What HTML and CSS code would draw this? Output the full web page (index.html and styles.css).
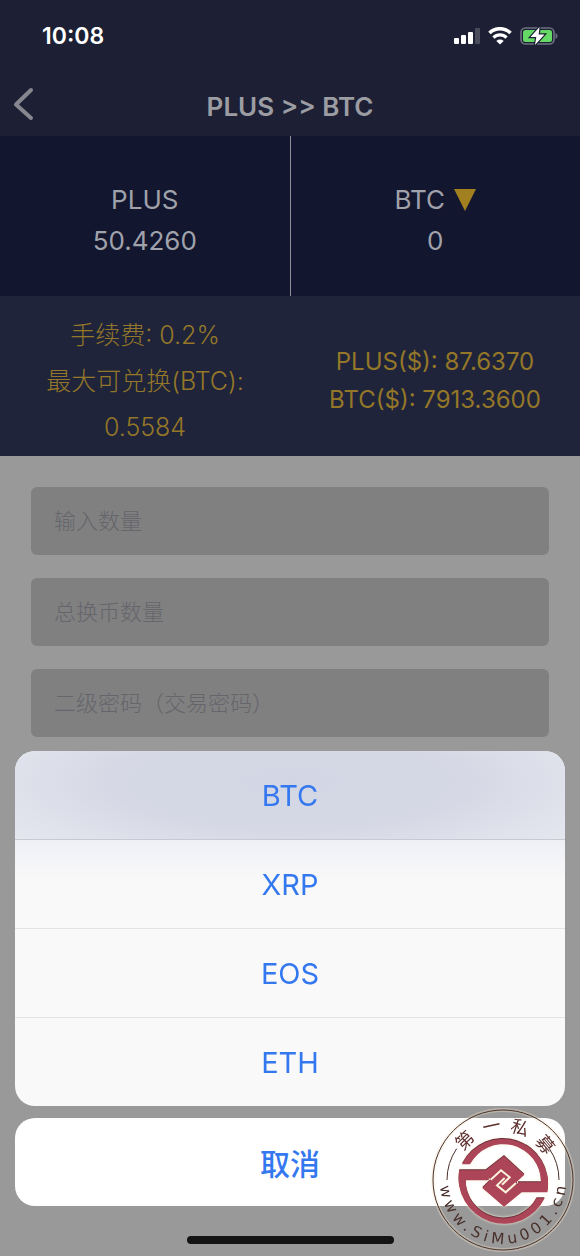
FILE: index.html
```
<!DOCTYPE html>
<html lang="zh-CN">
<head>
    <meta charset="UTF-8">
    <meta name="viewport" content="width=device-width, initial-scale=1.0">
    <title>PLUS &gt;&gt; BTC</title>
    <link rel="stylesheet" href="styles.css">
</head>
<body>
    <div class="status-bar">
        <span class="time">10:08</span>
        <div class="status-icons">
            <svg width="27" height="18" viewBox="0 0 27 18">
                <rect x="1" y="11" width="5" height="6" rx="1" fill="#fff"/>
                <rect x="8" y="8" width="5" height="9" rx="1" fill="#fff"/>
                <rect x="15" y="5" width="5" height="12" rx="1" fill="#fff"/>
                <rect x="22" y="1" width="5" height="16" rx="1" fill="#4a4c5c"/>
            </svg>
            <svg width="24" height="18" viewBox="0 0 24 18">
                <path d="M1.500 6a15 15 0 0 1 21 0" fill="none" stroke="#fff" stroke-width="3.6"/>
                <path d="M5.500 10.600a9.200 9.200 0 0 1 13 0" fill="none" stroke="#fff" stroke-width="3.2"/>
                <path d="M12 17.500l-3.700-3.600a5.400 5.400 0 0 1 7.400 0z" fill="#fff"/>
            </svg>
            <svg width="38" height="18" viewBox="0 0 38 18">
                <rect x="1" y="1" width="33" height="16" rx="4.5" fill="none" stroke="#6f7180" stroke-width="1.6"/>
                <rect x="3" y="3" width="29" height="12" rx="2.5" fill="#65d965"/>
                <path d="M35.500 6v6c2.600-.8 2.600-5.200 0-6z" fill="#6f7180"/>
                <path d="M19.500 0L10.500 10h5.800L15 18l9.500-10.500h-5.800z" fill="#fff" stroke="#1d2034" stroke-width="2.400" paint-order="stroke"/>
            </svg>
        </div>
    </div>
    <header class="header">
        <button class="back" type="button" aria-label="返回">
            <svg width="22" height="34" viewBox="0 0 22 34"><path d="M19 3L4 17.500L19 31" fill="none" stroke="#85868e" stroke-width="4" stroke-linecap="round" stroke-linejoin="round"/></svg>
        </button>
        <h1>PLUS &gt;&gt; BTC</h1>
    </header>
    <div class="coins">
        <div class="coin">
            <div>PLUS</div>
            <div>50.4260</div>
        </div>
        <div class="coin">
            <button class="coin-select" type="button">BTC <span class="arrow"></span></button>
            <div>0</div>
        </div>
    </div>
    <div class="info">
        <div class="fee">
            <div>手续费: 0.2%</div>
            <div>最大可兑换(BTC):</div>
            <div>0.5584</div>
        </div>
        <div class="price">
            <div>PLUS($): 87.6370</div>
            <div>BTC($): 7913.3600</div>
        </div>
    </div>
    <form class="form">
        <input type="text" name="amount" placeholder="输入数量" aria-label="输入数量">
        <input type="text" name="total" placeholder="总换币数量" aria-label="总换币数量">
        <input type="password" name="password" placeholder="二级密码（交易密码）" aria-label="二级密码（交易密码）">
    </form>

    <div class="sheet">
        <div class="options">
            <button type="button">BTC</button>
            <button type="button">XRP</button>
            <button type="button">EOS</button>
            <button type="button">ETH</button>
        </div>
        <button class="cancel" type="button">取消</button>
        <div class="home-indicator"></div>
        <svg class="seal" viewBox="31 22 438 438">
            <defs>
                <path id="sealBottom" d="M62 215A190 190 0 1 0 438 215"/>
            </defs>
            <circle class="seal-glow" cx="250" cy="241" r="210"/>
            <circle class="seal-line" cx="250" cy="241" r="210"/>
            <path class="seal-line" d="M82 241A168 168 0 0 1 111 147M418 241A168 168 0 0 0 389 147"/>
            <g transform="translate(105 90)">
                <path class="seal-mark" d="M22 104A136 136 0 0 1 278 188H190V158H259A113 113 0 0 0 46 104ZM270 206A136 136 0 0 1 14 122H102V152H33A113 113 0 0 0 246 206ZM93 122L148 79L209 135L185 158L201 188L148 231L83 175L107 152Z"/>
                <path class="seal-hook" d="M108 150L139 122L165 143L142 165M184 160L153 188L127 167L150 145"/>
            </g>
            <g class="seal-name">
                <text x="250" y="95" transform="rotate(-44 250 241)">第</text>
                <text x="250" y="95" transform="rotate(-12 250 241)">一</text>
                <text x="250" y="95" transform="rotate(18 250 241)">私</text>
                <text x="250" y="95" transform="rotate(50 250 241)">募</text>
            </g>
            <text class="seal-url" dx="0 13 13 13 13 13 13 13 13 13 13 13 13 13"><textPath href="#sealBottom" startOffset="50%">www.SiMu001.cn</textPath></text>
        </svg>
    </div>
</body>
</html>
```
FILE: styles.css
```
* {
    box-sizing: border-box;
}
body {
    margin: 0;
    min-height: 100vh;
    background: #999;
    font-family: Inter, 'Noto Sans CJK SC', sans-serif;
}
button {
    padding: 0;
    border: none;
    background: none;
    font: inherit;
    color: inherit;
    cursor: pointer;
}
svg {
    display: block;
}

.status-bar {
    display: flex;
    justify-content: space-between;
    align-items: center;
    height: 72px;
    padding: 0 22px 0 42px;
    background: #1d2034;
    color: #fff;
}
.time {
    font-size: 23px;
    font-weight: 600;
}
.status-icons {
    display: flex;
    gap: 8px;
}
.header {
    display: grid;
    grid-template-columns: 48px 1fr 48px;
    align-items: center;
    height: 64px;
    background: #1d2034;
    color: #9c9da3;
}
.header h1 {
    margin: 4px 0 0;
    font-size: 26px;
    font-weight: 600;
    text-align: center;
}
.back {
    justify-self: start;
    padding-left: 12px;
}

.coins {
    display: flex;
    height: 160px;
    background: #12162e;
    color: #a0a2ab;
    font-size: 26px;
    line-height: 41px;
}
.coin {
    flex: 1;
    display: flex;
    flex-direction: column;
    align-items: center;
    justify-content: center;
    padding-top: 8px;
}
.coin + .coin {
    border-left: 1px solid #8c8e98;
}
.coin-select {
    display: flex;
    align-items: center;
    gap: 9px;
}
.arrow {
    border: 11px solid transparent;
    border-top: 22px solid #a28020;
    border-bottom: 0;
}

.info {
    display: flex;
    align-items: center;
    min-height: 160px;
    padding-top: 10px;
    background: #1f243a;
    color: #947728;
    font-size: 24px;
    text-align: center;
}
.fee,
.price {
    flex: 1;
}
.fee {
    font-size: 25px;
    font-weight: 300;
    line-height: 46px;
}
.price {
    line-height: 38px;
}

.form {
    display: flex;
    flex-direction: column;
    gap: 23px;
    padding: 31px;
}
.form input {
    width: 100%;
    height: 68px;
    padding: 0 23px;
    border: none;
    border-radius: 6px;
    background: #808080;
    font-family: inherit;
    font-size: 22px;
    font-weight: 300;
}
.form input::placeholder {
    color: #65656b;
}

/* bottom action sheet */
.sheet {
    position: fixed;
    left: 0;
    right: 0;
    bottom: 0;
    display: flex;
    flex-direction: column;
    gap: 12px;
    padding: 0 15px 12px;
    color: #3478f0;
    font-size: 29px;
}
.options {
    display: flex;
    flex-direction: column;
    border-radius: 20px;
    overflow: hidden;
    background: #f9f9f9;
}
.options button {
    height: 88px;
}
.options button + button {
    height: 89px;
    border-top: 1px solid #e4e4e6;
}
.options button:first-child {
    background: radial-gradient(ellipse 65% 110% at 50% 35%, #d2d5e3 0%, #d6d9e5 50%, #e6e8f0 100%);
}
.options button:nth-child(2) {
    border-top-color: #c8cad3;
    background: linear-gradient(#eff0f6, #f9f9f9 50%);
}
.cancel {
    height: 88px;
    border-radius: 20px;
    background: #fff;
    font-size: 30px;
    font-weight: 500;
}
.home-indicator {
    align-self: center;
    width: 207px;
    height: 8px;
    margin-top: 18px;
    border-radius: 4px;
    background: #141414;
}

.seal {
    position: absolute;
    right: 4px;
    bottom: 3px;
    width: 146px;
    height: 146px;
}
.seal-glow {
    fill: none;
    stroke: #f3e6cc;
    stroke-width: 12px;
    opacity: 0.35;
}
.seal-line {
    fill: none;
    stroke: #49302a;
    stroke-width: 3px;
}
.seal-mark {
    fill: #ad4558;
    filter: drop-shadow(0 -3px 1px #6b3038) drop-shadow(0 0 4px #fbf3dc);
}
.seal-hook {
    fill: none;
    stroke: #fbf3dc;
    stroke-width: 6px;
}
.seal-name {
    fill: #5c2e2c;
    font-size: 54px;
    text-anchor: middle;
}
.seal-url {
    fill: #49302a;
    font-family: 'DejaVu Sans', sans-serif;
    font-size: 46px;
    text-anchor: middle;
}
```
